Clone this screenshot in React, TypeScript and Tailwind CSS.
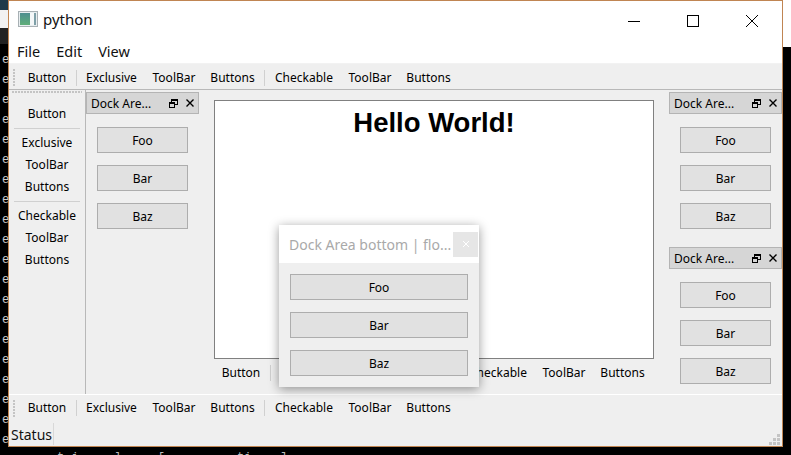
import React from "react";

const font = "font-['Noto_Sans','Open_Sans',sans-serif]";

function Sep({ cls }: { cls: string }) {
  return <div className={`w-px h-[16px] bg-[#d0d0d0] ${cls}`} />;
}

function Cell({ w, label }: { w: string; label: string }) {
  return <div className={`${w} text-center text-[12px] leading-[16px] text-black`}>{label}</div>;
}

function HItems() {
  return (
    <>
      <Cell w="w-[50px]" label="Button" />
      <Sep cls="ml-[4px] mr-[2px]" />
      <Cell w="w-[65px]" label="Exclusive" />
      <Cell w="w-[60px]" label="ToolBar" />
      <Cell w="w-[57px]" label="Buttons" />
      <Sep cls="mx-[3px]" />
      <Cell w="w-[72px]" label="Checkable" />
      <Cell w="w-[60px]" label="ToolBar" />
      <Cell w="w-[57px]" label="Buttons" />
    </>
  );
}

function Grip() {
  return (
    <div className="ml-[4px] mr-[7px] w-[2px] flex flex-col gap-[1px]">
      {Array.from({ length: 6 }).map((_, i) => (
        <div key={i} className="w-[2px] h-[2px] bg-[#c4c4c4]" />
      ))}
    </div>
  );
}

function DockBtn({ label, w = "w-[91px]" }: { label: string; w?: string }) {
  return (
    <div className={`${w} h-[26px] border border-[#adadad] bg-[#e1e1e1] flex items-center justify-center pt-[2px] text-[12px] text-black`}>
      {label}
    </div>
  );
}

function FloatIcon() {
  return (
    <svg width="9" height="9" viewBox="0 0 9 9" fill="none" stroke="#000" strokeWidth="1" shapeRendering="crispEdges">
      <rect x="2.5" y="0.5" width="6" height="5" />
      <path d="M2 1.5H9" />
      <rect x="0.5" y="3.5" width="5" height="5" fill="#d6d6d6" />
      <path d="M0 4.5H6" />
    </svg>
  );
}

function CloseIcon() {
  return (
    <svg width="8" height="8" viewBox="0 0 8 8" fill="none" stroke="#000" strokeWidth="1.4">
      <path d="M0.5 0.5L7.5 7.5M7.5 0.5L0.5 7.5" />
    </svg>
  );
}

function DockTitle({ w }: { w: string }) {
  return (
    <div className={`${w} h-[22px] border border-[#b4b4b4] bg-[#d6d6d6] flex items-center pl-[4px] text-[12px] text-black`}>
      <span className="w-[78px] whitespace-nowrap pt-[1px]">Dock Are...</span>
      <FloatIcon />
      <span className="ml-[8px] flex"><CloseIcon /></span>
    </div>
  );
}

function DockBody({ cls }: { cls: string }) {
  return (
    <div className={`flex flex-col gap-[12px] ${cls}`}>
      <DockBtn label="Foo" />
      <DockBtn label="Bar" />
      <DockBtn label="Baz" />
    </div>
  );
}

function VCell({ label }: { label: string }) {
  return <div className="h-[22px] flex items-center justify-center text-[12px] text-black">{label}</div>;
}

function VSep() {
  return <div className="h-px bg-[#d0d0d0] mx-[5px] my-[3px]" />;
}

export default function App() {
  return (
    <div className={`w-[791px] h-[455px] relative overflow-hidden bg-black flex ${font}`}>
      {/* desktop left of the window */}
      <div className="w-[8px] flex flex-col shrink-0 overflow-hidden">
        <div className="h-[10px] bg-[#1f3a4a]" />
        <div className="h-[18px] bg-[#f2f2f2]" />
        <div className="h-[16px] bg-[#222]" />
        <div className="pt-[6px] pl-[2px] font-['Liberation_Mono',monospace] text-[12px] leading-[20px] text-[#cccccc] whitespace-pre">
          {"e\ne\ne\ne\ne\ne\ne\ne\ne\ne\ne\ne\ne\ne\ne\ne\ne\ne\ne\ne"}
        </div>
      </div>

      {/* window */}
      <div className="w-[775px] h-[447px] shrink-0 border border-[#c08552] bg-[#efefef] flex flex-col">
        <div className="h-[39px] bg-white flex items-center pl-[9px] shrink-0">
          <div className="w-[20px] h-[16px] border border-[#a8b0b4] bg-[#e8eef0] flex items-stretch p-px mt-[-3px]">
            <div className="w-[10px] bg-gradient-to-b from-[#4f8f90] to-[#5fae78]" />
            <div className="flex-1 bg-[#f4f7f8]" />
            <div className="w-[2px] bg-[#7fa0a8]" />
          </div>
          <span className="ml-[5px] text-[15px] leading-[20px] text-[#111] mt-[-3px]">python</span>
          <div className="ml-auto flex items-center text-black">
            <svg width="12" height="12" viewBox="0 0 12 12" className="mr-[47px]" shapeRendering="crispEdges"><path d="M0 6.5H12" stroke="#000" /></svg>
            <svg width="12" height="12" viewBox="0 0 12 12" className="mr-[47px]" shapeRendering="crispEdges"><rect x="0.5" y="0.5" width="11" height="11" fill="none" stroke="#000" /></svg>
            <svg width="12" height="12" viewBox="0 0 12 12" className="mr-[24px]"><path d="M0 0L12 12M12 0L0 12" stroke="#000" strokeWidth="1" /></svg>
          </div>
        </div>
        <div className="h-[23px] bg-white flex items-center pl-[8px] gap-[16px] text-[14.5px] text-[#111] shrink-0">
          <span>File</span>
          <span>Edit</span>
          <span>View</span>
        </div>
        <div className="h-px bg-[#f2f2f2] shrink-0" />
        <div className="h-[26px] shrink-0 flex items-center border-b border-[#b8b8b8] pt-[2px]">
          <Grip />
          <HItems />
        </div>

        {/* middle */}
        <div className="h-[304px] shrink-0 flex items-stretch">
          <div className="w-[77px] shrink-0 border-r border-[#b8b8b8]">
            <div className="mx-[3px] mt-[1px] h-[2px] flex gap-[1px] overflow-hidden">
              {Array.from({ length: 24 }).map((_, i) => (
                <div key={i} className="w-[2px] h-[2px] shrink-0 bg-[#c4c4c4]" />
              ))}
            </div>
            <div className="pt-[10px]">
              <VCell label="Button" />
              <VSep />
              <VCell label="Exclusive" />
              <VCell label="ToolBar" />
              <VCell label="Buttons" />
              <VSep />
              <VCell label="Checkable" />
              <VCell label="ToolBar" />
              <VCell label="Buttons" />
            </div>
          </div>

          <div className="w-[113px] shrink-0 pt-[2px]">
            <DockTitle w="w-[113px]" />
            <DockBody cls="pl-[11px] pt-[13px]" />
          </div>

          <div className="w-[470px] shrink-0 pl-[15px] pt-[10px]">
            <div className="w-[440px] h-[259px] bg-white border border-[#808080] text-center text-[27.5px] leading-[43px] font-bold text-black font-['Liberation_Sans',sans-serif]">
              Hello World!
            </div>
            <div className="h-[27px] flex items-center pl-[2px]">
              <HItems />
            </div>
          </div>

          <div className="w-[113px] shrink-0 pt-[2px]">
            <DockTitle w="w-[113px]" />
            <DockBody cls="pl-[11px] pt-[13px]" />
            <div className="mt-[18px]">
              <DockTitle w="w-[113px]" />
            </div>
            <DockBody cls="pl-[11px] pt-[13px]" />
          </div>
        </div>

        <div className="h-px bg-white shrink-0" />
        <div className="h-[26px] shrink-0 flex items-center">
          <Grip />
          <HItems />
        </div>
        <div className="flex-1 flex items-center relative">
          <div className="pl-[2px] pr-[1px] h-[22px] border-r border-[#d8d8d8] text-[14px] leading-[24px] text-[#111]">Status</div>
          <svg width="11" height="11" viewBox="0 0 11 11" className="absolute right-[2px] bottom-[1px]" fill="#c4c4c4">
            <rect x="8" y="0" width="3" height="3" />
            <rect x="4" y="4" width="3" height="3" />
            <rect x="8" y="4" width="3" height="3" />
            <rect x="0" y="8" width="3" height="3" />
            <rect x="4" y="8" width="3" height="3" />
            <rect x="8" y="8" width="3" height="3" />
          </svg>
        </div>
      </div>

      {/* desktop right of the window */}
      <div className="flex-1 flex flex-col">
        <div className="h-[47px] bg-white" />
      </div>

      {/* terminal text below the window */}
      <div className="absolute left-[57px] top-[450px] text-[#bbbbbb] font-['Liberation_Mono',monospace] text-[12px] leading-[16px] whitespace-pre">
        {"t i     l     [          ti    ]"}
      </div>

      {/* floating dock */}
      <div className="absolute left-[279px] top-[225px] w-[200px] h-[162px] bg-[#efefef] shadow-[0_2px_10px_rgba(0,0,0,0.4)]">
        <div className="h-[38px] bg-white flex items-center pl-[10px]">
          <span className="w-[164px] whitespace-nowrap text-[14px] text-[#a9a9a9]">Dock Area bottom | flo...</span>
          <div className="w-[25px] h-[25px] bg-[#e6e6e6] flex items-center justify-center">
            <svg width="8" height="8" viewBox="0 0 8 8" fill="none" stroke="#fff" strokeWidth="1">
              <path d="M1 1L7 7M7 1L1 7" />
            </svg>
          </div>
        </div>
        <div className="flex flex-col gap-[12px] pl-[11px] pt-[11px]">
          <DockBtn label="Foo" w="w-[178px]" />
          <DockBtn label="Bar" w="w-[178px]" />
          <DockBtn label="Baz" w="w-[178px]" />
        </div>
      </div>
    </div>
  );
}
